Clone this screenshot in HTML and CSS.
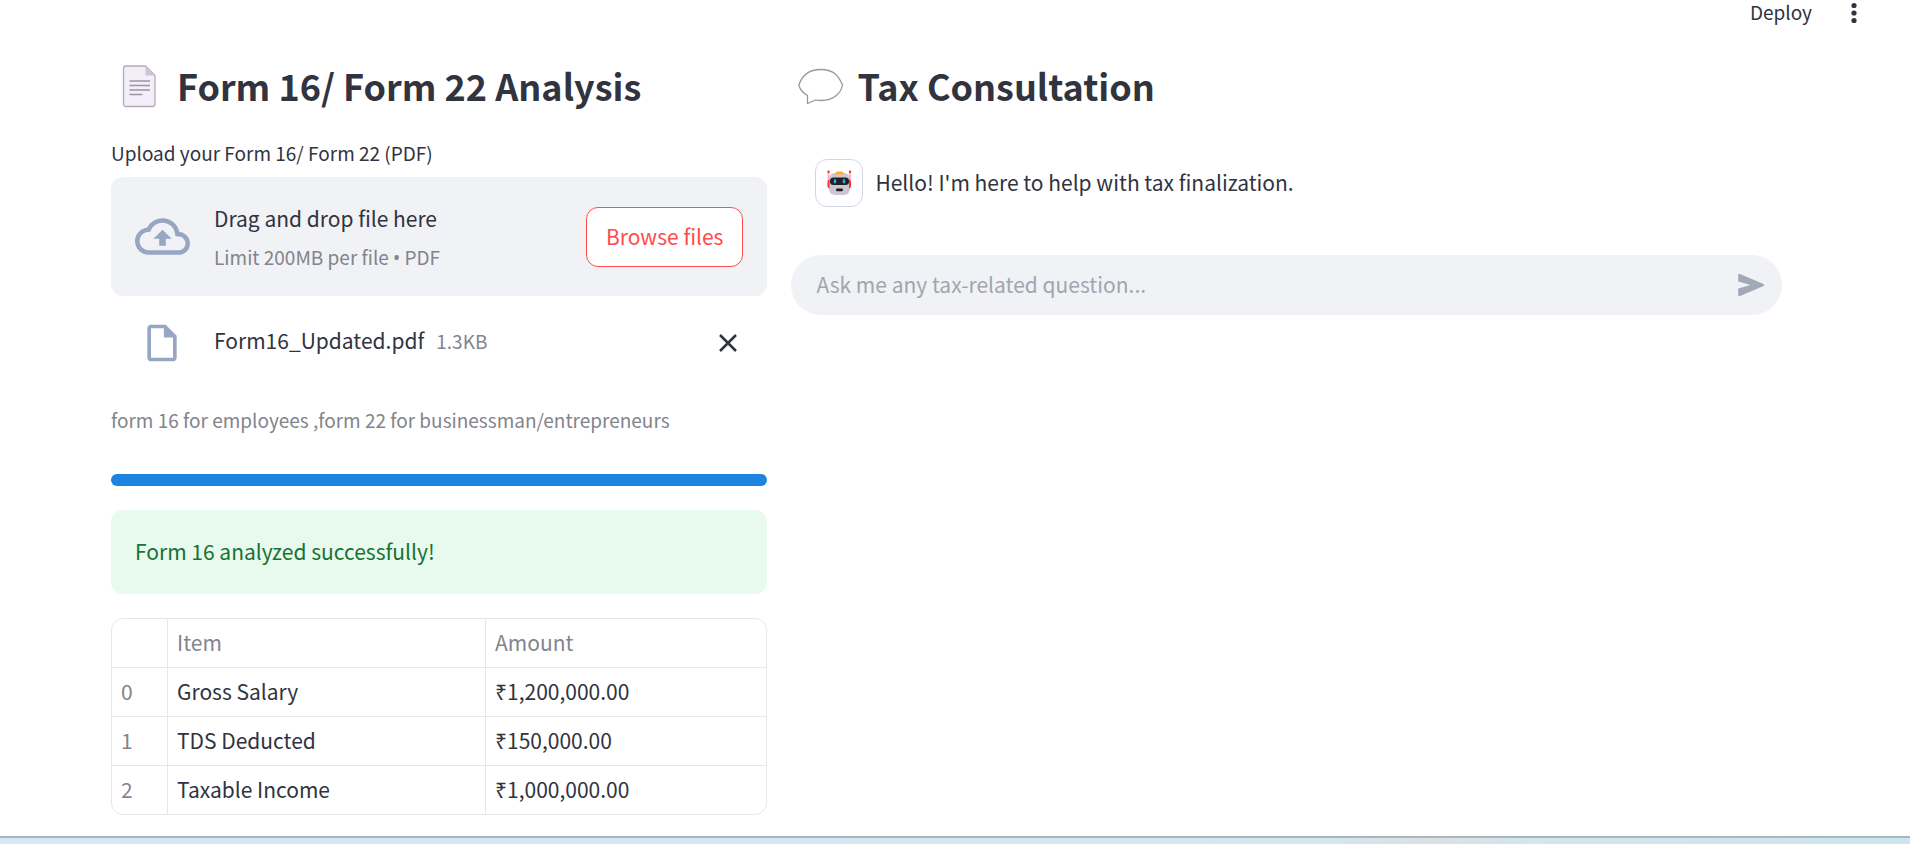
FILE: index.html
```html
<!DOCTYPE html>
<html lang="en">
<head>
<meta charset="utf-8">
<title>Form 16/ Form 22 Analysis</title>
<link rel="stylesheet" href="styles.css">
</head>
<body>
<header class="toolbar">
  <button class="deploy" type="button">Deploy</button>
  <button class="menu" type="button" aria-label="Main menu">
    <svg width="8" height="22" viewBox="0 0 8 22"><circle cx="4" cy="3.5" r="2.6"/><circle cx="4" cy="11" r="2.6"/><circle cx="4" cy="18.5" r="2.6"/></svg>
  </button>
</header>
<main class="columns">
  <section class="column column-form">
    <h2 class="heading">
      <svg class="heading-icon" width="56" height="48" viewBox="0 0 56 48" aria-hidden="true">
        <path d="M15 3h19.5L44 12.500V41a2.500 2.500 0 0 1-2.500 2.500h-27A2.500 2.500 0 0 1 12.500 41V5.500A2.500 2.500 0 0 1 15 3z" fill="#f3eef8" stroke="#b3a9ba" stroke-width="1.300"/>
        <path d="M34.500 3v9.500H44z" fill="#cdc4d6"/>
        <path d="M18.500 18H39M18.500 22.500H39M18.500 27H39M18.500 31.500H31.500" stroke="#9d93a6" stroke-width="1.500"/>
      </svg>
      <span>Form 16/ Form 22 Analysis</span>
    </h2>
    <label class="upload-label" for="upload">Upload your Form 16/ Form 22 (PDF)</label>
    <div class="dropzone">
      <svg class="cloud" width="55" height="55" viewBox="0 0 24 24" aria-hidden="true"><path d="M19.350 10.040A7.490 7.490 0 0 0 12 4C9.110 4 6.600 5.640 5.350 8.040A5.994 5.994 0 0 0 0 14c0 3.310 2.690 6 6 6h13c2.760 0 5-2.240 5-5 0-2.640-2.050-4.780-4.650-4.960zM19 18H6c-2.210 0-4-1.790-4-4 0-2.050 1.530-3.760 3.560-3.970l1.070-.11.5-.95A5.469 5.469 0 0 1 12 6c2.620 0 4.880 1.860 5.390 4.430l.3 1.500 1.530.11A2.980 2.980 0 0 1 22 15c0 1.650-1.350 3-3 3zM8 13h2.550v3h2.900v-3H16l-4-4z"/></svg>
      <div class="drop-text">
        <span>Drag and drop file here</span>
        <small class="muted">Limit 200MB per file <span class="bullet">•</span> PDF</small>
      </div>
      <button class="browse" id="upload" type="button">Browse files</button>
    </div>
    <div class="file">
      <svg class="file-icon" width="44" height="44" viewBox="0 0 24 24" aria-hidden="true"><path d="M6 2c-1.100 0-1.990.9-1.990 2L4 20c0 1.100.89 2 1.990 2H18c1.100 0 2-.9 2-2V8l-6-6H6zm0 18V4h7v5h5v11H6z"/></svg>
      <div class="file-text">
        <span>Form16_Updated.pdf</span>
        <small class="muted">1.3KB</small>
      </div>
      <button class="remove" type="button" aria-label="Remove file">
        <svg width="20" height="20" viewBox="0 0 20 20"><path d="M2 2l16 16M18 2L2 18"/></svg>
      </button>
    </div>
    <p class="caption muted">form 16 for employees ,form 22 for businessman/entrepreneurs</p>
    <div class="progress" role="progressbar" aria-label="Analysis" aria-valuenow="100"><div class="progress-fill" style="width:100%"></div></div>
    <div class="alert" role="status">Form 16 analyzed successfully!</div>
    <div class="table-frame">
      <table class="table">
        <colgroup><col class="col-index"><col class="col-item"><col></colgroup>
        <thead><tr><th></th><th scope="col">Item</th><th scope="col">Amount</th></tr></thead>
        <tbody>
          <tr><th scope="row">0</th><td>Gross Salary</td><td>₹1,200,000.00</td></tr>
          <tr><th scope="row">1</th><td>TDS Deducted</td><td>₹150,000.00</td></tr>
          <tr><th scope="row">2</th><td>Taxable Income</td><td>₹1,000,000.00</td></tr>
        </tbody>
      </table>
    </div>
  </section>
  <section class="column column-chat">
    <h2 class="heading">
      <svg class="heading-icon" width="56" height="48" viewBox="0 0 56 48" aria-hidden="true">
        <path d="M29.500 6.500C44 6.500 48 14 51.500 22C50 30 43 37.500 30 37.500C28 37.500 26 37.200 24.500 37L16.500 40.500V32.500C12 30 9 26.500 7.800 22C11 13 17 6.500 29.500 6.500z" fill="#fff" stroke="#989898" stroke-width="1.300" stroke-linejoin="round"/>
      </svg>
      <span>Tax Consultation</span>
    </h2>
    <div class="message">
      <div class="avatar">
        <svg width="28" height="28" viewBox="0 0 28 28" aria-hidden="true">
          <rect x="4" y="4" width="21" height="22" rx="6" fill="#cdc4d6"/>
          <path d="M10.500 5.500V4A1.500 1.500 0 0 1 12 2.500h5A1.500 1.500 0 0 1 18.500 4v1.500z" fill="#ffb02e"/>
          <path d="M3.500 3v9M25 3v9" stroke="#f7a3a8" stroke-width="1.500"/>
          <path d="M4.500 10.500v9A2.500 2.500 0 0 1 2.500 17v-4a2.500 2.500 0 0 1 2-2.500zM24 10.500v9a2.500 2.500 0 0 0 2-2.500v-4a2.500 2.500 0 0 0-2-2.500z" fill="#f8312f"/>
          <circle cx="3.500" cy="2.800" r="1.200" fill="#f8312f"/><circle cx="25" cy="2.800" r="1.200" fill="#f8312f"/>
          <rect x="5" y="8.500" width="19" height="7.500" rx="3.500" fill="#212121"/>
          <ellipse cx="10" cy="12.200" rx="1.300" ry="2.200" fill="#26a9f5"/><ellipse cx="19" cy="12.200" rx="1.300" ry="2.200" fill="#26a9f5"/>
          <rect x="11" y="19.500" width="7" height="2.800" rx="1.400" fill="#212121"/>
        </svg>
      </div>
      <p>Hello! I'm here to help with tax finalization.</p>
    </div>
    <form class="chat">
      <input class="chat-input" type="text" aria-label="Ask me any tax-related question" placeholder="Ask me any tax-related question...">
      <button class="send" type="button" aria-label="Send">
        <svg width="28" height="26" viewBox="0 0 28 26"><path d="M1.200 3.200v6.300L13.500 13 1.200 16.500v6.300a1.300 1.300 0 0 0 1.800 1.200L26.500 14a1.100 1.100 0 0 0 0-2L3 2a1.300 1.300 0 0 0-1.800 1.200z"/></svg>
      </button>
    </form>
  </section>
</main>
<footer class="strip"></footer>
</body>
</html>
```
FILE: styles.css
```css
* { box-sizing: border-box; }

body {
  display: flex;
  flex-direction: column;
  min-height: 100vh;
  margin: 0;
  background: #fff;
  color: #31333f;
  font-family: "Noto Sans CJK SC", "Noto Sans", sans-serif;
  font-size: 21px;
  line-height: 36px;
}

button {
  margin: 0;
  padding: 0;
  border: 0;
  background: none;
  color: inherit;
  font: inherit;
  cursor: pointer;
}

svg { display: block; flex: none; }
p { margin: 0; }
small { font-size: 19px; }
.muted { color: #83848c; }

.toolbar {
  display: flex;
  justify-content: flex-end;
  align-items: center;
  gap: 38px;
  height: 26px;
  padding-right: 52px;
}
.deploy { font-size: 19px; line-height: 24px; padding-bottom: 2px; }
.menu { fill: #31333f; }

.columns {
  display: flex;
  flex: 1 0 auto;
  gap: 24px;
  padding: 34px 128px 20px 111px;
}
.column { display: flex; flex-direction: column; min-width: 0; }
.column-form { flex: 1 1 calc(40% - 24px); }
.column-chat { flex: 1 1 calc(60% - 24px); }

.heading {
  display: flex;
  align-items: center;
  gap: 10px;
  margin: 0;
  font-size: 36px;
  font-weight: 600;
  line-height: 54px;
}
.heading span { padding-bottom: 4px; line-height: 50px; }

.upload-label {
  margin: 23px 0 8px;
  font-size: 19px;
  line-height: 32px;
}
.dropzone {
  display: flex;
  align-items: center;
  padding: 20px 24px;
  min-height: 119px;
  border-radius: 12px;
  background: #f0f2f6;
}
.cloud, .file-icon { fill: #97a6c3; }
.drop-text {
  display: flex;
  flex: 1;
  flex-direction: column;
  gap: 3px;
  margin-left: 24px;
  padding-top: 3px;
}
.bullet { font-family: "Noto Sans", sans-serif; }
.browse {
  height: 60px;
  padding: 0 19px 2px;
  border: 1px solid #ff4b4b;
  border-radius: 12px;
  background: #fff;
  color: #ff4b4b;
}
.file {
  display: flex;
  align-items: center;
  height: 48px;
  margin-top: 23px;
  padding: 0 29px;
}
.file-text {
  display: flex;
  align-items: baseline;
  gap: 12px;
  margin-left: 30px;
  padding-bottom: 6px;
}
.remove { margin-left: auto; }
.remove svg { fill: none; stroke: #31333f; stroke-width: 2.5; }

.caption {
  margin-top: 37px;
  font-size: 19px;
  line-height: 32px;
}
.progress {
  height: 12px;
  margin-top: 38px;
  overflow: hidden;
  border-radius: 6px;
  background: #f0f2f6;
}
.progress-fill { height: 100%; background: #1c83e1; }
.alert {
  margin: 24px 0;
  padding: 23px 24px 25px;
  border-radius: 12px;
  background: #e8f9ee;
  color: #177233;
}

.table-frame {
  overflow: hidden;
  border: 1px solid #e6e7e9;
  border-radius: 12px;
}
.table {
  width: 100%;
  border-collapse: separate;
  border-spacing: 0;
  table-layout: fixed;
}
.col-index { width: 56px; }
.col-item { width: 318px; }
.table th, .table td {
  height: 49px;
  padding: 0 9px 2px;
  border: 0 solid #e6e7e9;
  border-width: 0 1px 1px 0;
  font-weight: 400;
  text-align: left;
}
.table th { color: #83848c; }
.table tr > :last-child { border-right-width: 0; }
.table tbody tr:last-child > * { height: 48px; border-bottom-width: 0; }

.message {
  display: flex;
  align-items: center;
  gap: 12px;
  margin-top: 45px;
  padding-left: 24px;
}
.message p { padding-bottom: 2px; }
.avatar {
  display: grid;
  place-items: center;
  width: 48px;
  height: 48px;
  border: 1px solid #d5d6e5;
  border-radius: 12px;
}
.chat {
  display: flex;
  align-items: center;
  height: 60px;
  margin-top: 48px;
  padding: 0 17px 0 25px;
  border-radius: 30px;
  background: #f0f2f6;
}
.chat-input {
  flex: 1;
  min-width: 0;
  padding: 0 0 2px;
  border: 0;
  outline: 0;
  background: none;
  color: inherit;
  font: inherit;
}
.chat-input::placeholder { color: #a3a5ae; opacity: 1; }
.send { fill: #a3a8b8; }

.strip {
  flex: none;
  height: 8px;
  border-top: 2px solid #a9b5bf;
  background: linear-gradient(90deg, #d5e8f4, #d2e9f1 62%, #d4e5ed 70%, #dce1e1 75%, #d3e5ed 80%, #cce6ed);
}
```
